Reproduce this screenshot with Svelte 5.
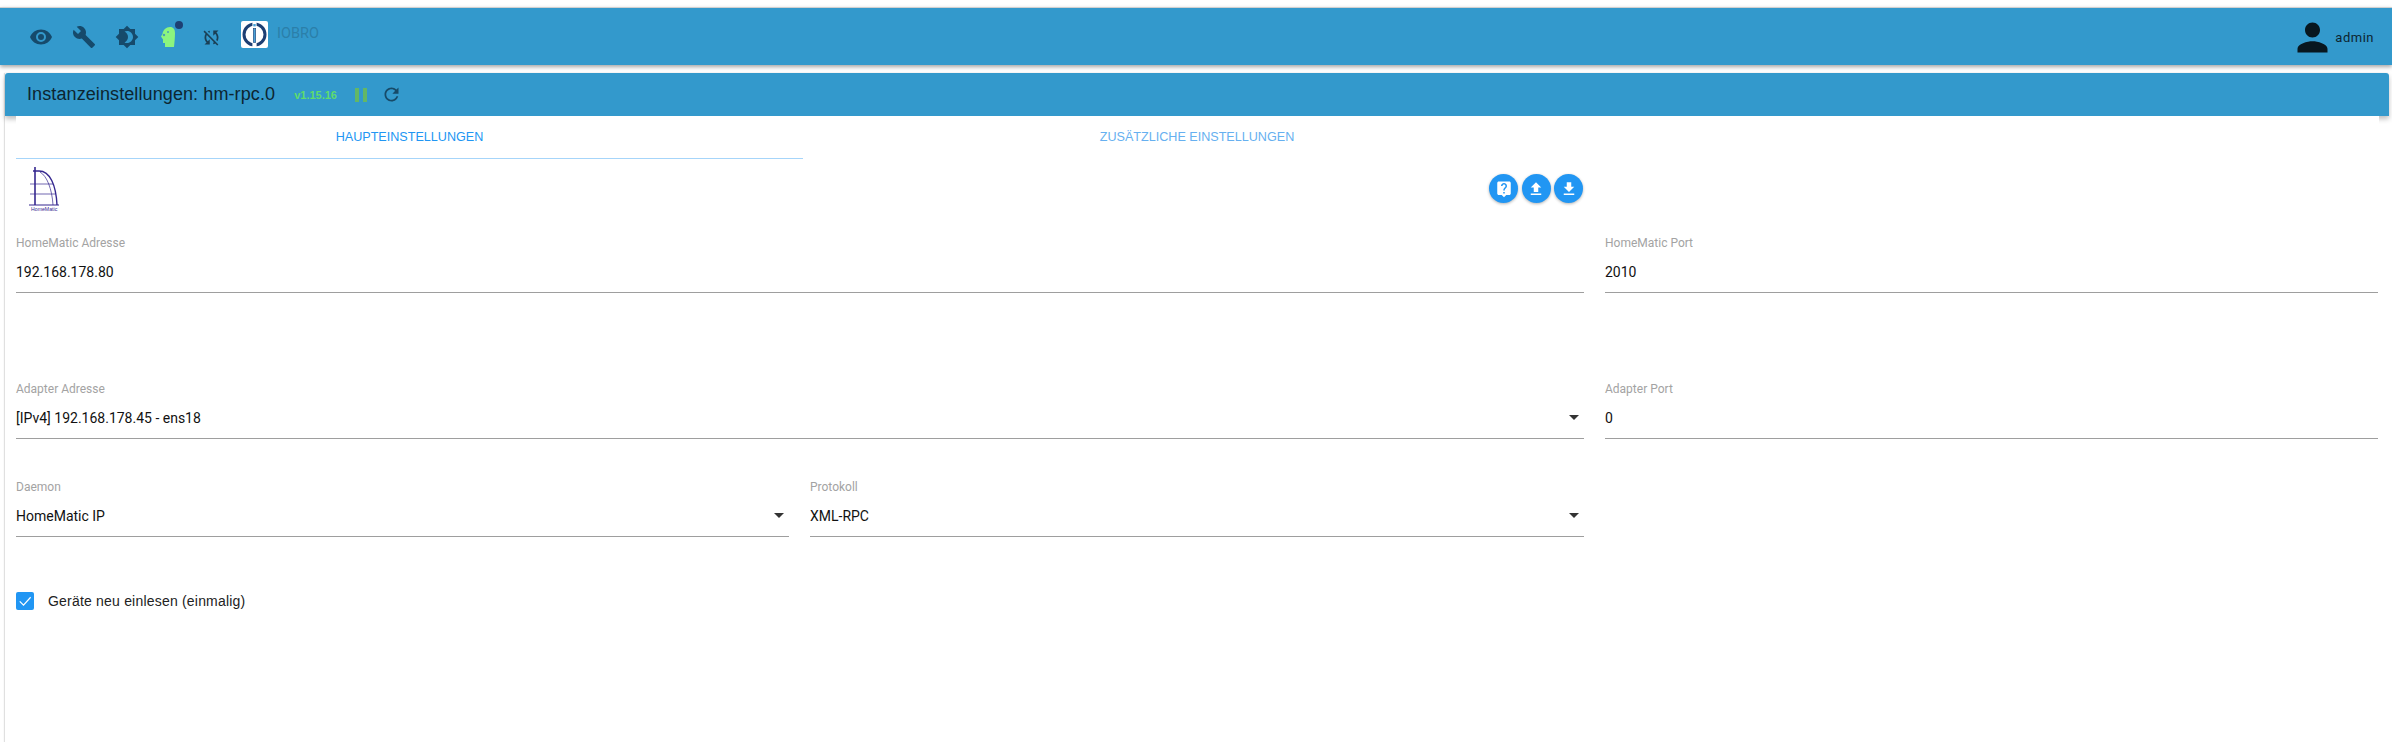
<script>
  const paths = {
    eye: "M12 9a3 3 0 0 0-3 3 3 3 0 0 0 3 3 3 3 0 0 0 3-3 3 3 0 0 0-3-3m0 8a5 5 0 0 1-5-5 5 5 0 0 1 5-5 5 5 0 0 1 5 5 5 5 0 0 1-5 5m0-12.5C7 4.5 2.73 7.61 1 12c1.73 4.39 6 7.5 11 7.5s9.27-3.11 11-7.5c-1.73-4.39-6-7.5-11-7.5z",
    wrench: "M22.7 19l-9.1-9.1c.9-2.3.4-5-1.5-6.9-2-2-5-2.4-7.4-1.3L9 6 6 9 1.6 4.7C.4 7.1.9 10.1 2.9 12.1c1.9 1.9 4.6 2.4 6.9 1.5l9.1 9.1c.4.4 1 .4 1.4 0l2.3-2.3c.5-.4.5-1.1.1-1.4z",
    brightness: "M20 8.69V4h-4.69L12 .69 8.69 4H4v4.69L.69 12 4 15.31V20h4.69L12 23.31 15.31 20H20v-4.69L23.31 12 20 8.69zM12 18c-.89 0-1.74-.2-2.5-.55C11.56 16.5 13 14.42 13 12s-1.44-4.5-3.5-5.45C10.26 6.2 11.11 6 12 6c3.31 0 6 2.69 6 6s-2.69 6-6 6z",
    syncOff: "M10 6.35V4.26c-.8.21-1.55.54-2.23.96l1.46 1.46c.25-.12.5-.24.77-.33zm-7.14-.94l2.36 2.36C4.45 8.99 4 10.44 4 12c0 2.21.91 4.2 2.36 5.64L4 20h6v-6l-2.24 2.24C6.68 15.15 6 13.66 6 12c0-1 .25-1.94.68-2.77l8.08 8.08c-.25.13-.5.25-.77.34v2.09c.8-.21 1.55-.54 2.23-.96l2.36 2.36 1.27-1.27L4.14 4.14 2.86 5.41zM20 4h-6v6l2.24-2.24C17.32 8.85 18 10.34 18 12c0 1-.25 1.94-.68 2.77l1.46 1.46C19.55 15.01 20 13.56 20 12c0-2.21-.91-4.2-2.36-5.64L20 4z",
    person: "M12 12c2.21 0 4-1.79 4-4s-1.79-4-4-4-4 1.79-4 4 1.79 4 4 4zm0 2c-2.67 0-8 1.34-8 4v2h16v-2c0-2.66-5.33-4-8-4z",
    refresh: "M17.65 6.35C16.2 4.9 14.21 4 12 4c-4.42 0-7.99 3.58-7.99 8s3.57 8 7.99 8c3.73 0 6.84-2.55 7.73-6h-2.08c-.82 2.33-3.04 4-5.65 4-3.31 0-6-2.69-6-6s2.69-6 6-6c1.66 0 3.14.69 4.22 1.78L13 11h7V4l-2.35 2.35z",
    pause: "M6 19h4V5H6v14zm8-14v14h4V5h-4z",
    help: "M19 2H5c-1.11 0-2 .9-2 2v14c0 1.1.89 2 2 2h4l3 3 3-3h4c1.1 0 2-.9 2-2V4c0-1.1-.9-2-2-2zm-6 16h-2v-2h2v2zm2.07-7.75l-.9.92C13.45 11.9 13 12.5 13 14h-2v-.5c0-1.1.45-2.1 1.17-2.83l1.24-1.26c.37-.36.59-.86.59-1.41 0-1.1-.9-2-2-2s-2 .9-2 2H8c0-2.21 1.79-4 4-4s4 1.79 4 4c0 .88-.36 1.68-.93 2.25z",
    upload: "M9 16h6v-6h4l-7-7-7 7h4zm-4 2h14v2H5z",
    download: "M19 9h-4V3H9v6H5l7 7 7-7zM5 18v2h14v-2H5z"
  };

  const rows = [
    { cls: "row-a", fields: [
      { label: "HomeMatic Adresse", value: "192.168.178.80", cls: "wide" },
      { label: "HomeMatic Port", value: "2010" }
    ]},
    { cls: "row-b", fields: [
      { label: "Adapter Adresse", value: "[IPv4] 192.168.178.45 - ens18", cls: "wide", select: true },
      { label: "Adapter Port", value: "0" }
    ]},
    { cls: "row-c", fields: [
      { label: "Daemon", value: "HomeMatic IP", select: true },
      { label: "Protokoll", value: "XML-RPC", select: true }
    ]}
  ];
</script>

<div class="page">
  <header class="toolbar">
    <div class="tools">
      <svg class="tool" viewBox="0 0 24 24"><path d={paths.eye} /></svg>
      <svg class="tool" viewBox="0 0 24 24"><path d={paths.wrench} /></svg>
      <svg class="tool" viewBox="0 0 24 24"><path d={paths.brightness} /></svg>
      <span class="head">
        <svg viewBox="0 0 14 20">
          <path fill="#8cf57f" d="M4 20 V16 H2 V12.5 L0 9.5 L1.5 7 C2 3 5 0 9 0 C12.5 0 14 2.5 14 6 C14 11 13.5 15 13 20 Z" />
          <circle cx="3" cy="8" r="1.2" fill="#4a9fb5" />
          <circle cx="7" cy="5" r="1" fill="#4a9fb5" />
        </svg>
        <i class="dot"></i>
      </span>
      <svg class="tool small" viewBox="0 0 24 24"><path d={paths.syncOff} /></svg>
    </div>
    <div class="logo">
      <svg viewBox="0 0 27 27">
        <circle cx="13.5" cy="13.5" r="10.5" fill="none" stroke="#1d3f73" stroke-width="3" />
        <rect x="11.4" y="1" width="4.2" height="25" fill="#fff" />
        <rect x="12.3" y="7.5" width="2.4" height="14" fill="#4aa3d8" stroke="#1d3f73" stroke-width=".6" />
        <rect x="12.3" y="3" width="2.4" height="2.4" fill="#4aa3d8" />
      </svg>
    </div>
    <span class="brand">IOBRO</span>
    <div class="user">
      <svg viewBox="0 0 24 24"><path d={paths.person} /></svg>
      <span>admin</span>
    </div>
  </header>

  <main class="card">
    <div class="card-head">
      <h1>Instanzeinstellungen: hm-rpc.0</h1>
      <span class="version">v1.15.16</span>
      <svg class="pause" viewBox="0 0 24 24"><path d={paths.pause} /></svg>
      <svg class="refresh" viewBox="0 0 24 24"><path d={paths.refresh} /></svg>
    </div>

    <div class="body">
      <nav class="tabs">
        <div class="tab active">HAUPTEINSTELLUNGEN</div>
        <div class="tab">ZUSÄTZLICHE EINSTELLUNGEN</div>
      </nav>

      <div class="tools-row">
        <svg class="hm-logo" viewBox="0 0 32 46">
          <g fill="none" stroke="#35278f">
            <path stroke-width="1.6" d="M7 40 V2" />
            <path stroke-width="1.4" d="M5 6 H11 C22 6 28 20 29 40" />
            <path stroke-width=".7" d="M12 7 C19 11 24 24 25 40" />
            <path stroke-width=".7" d="M2 19 H25 M2 29 H27" />
            <path stroke-width="1" d="M1 40 H31" />
          </g>
          <text x="3" y="45.5" class="hm-text">HomeMatic</text>
        </svg>
        <div class="actions">
          <button aria-label="Hilfe"><svg viewBox="0 0 24 24"><path d={paths.help} /></svg></button>
          <button aria-label="Hochladen"><svg viewBox="0 0 24 24"><path d={paths.upload} /></svg></button>
          <button aria-label="Herunterladen"><svg viewBox="0 0 24 24"><path d={paths.download} /></svg></button>
        </div>
      </div>

      {#each rows as row}
        <div class="form-row {row.cls}">
          {#each row.fields as f}
            <div class="field {f.cls ?? ''}">
              <span class="label">{f.label}</span>
              <div class="value">
                <span>{f.value}</span>
                {#if f.select}<i class="caret"></i>{/if}
              </div>
            </div>
          {/each}
        </div>
      {/each}

      <label class="check">
        <span class="box">
          <svg viewBox="0 0 24 24"><path d="M5 12.5 L10 17.5 L19.5 7" /></svg>
        </span>
        <span>Geräte neu einlesen (einmalig)</span>
      </label>
    </div>
  </main>
</div>

<style>
  :global(body) {
    background: #fff;
    font-family: Roboto, "Liberation Sans", sans-serif;
    overflow: hidden;
  }
  .page {
    height: 742px;
    overflow: hidden;
    background: #fff;
  }
  .toolbar {
    margin-top: 7px;
    height: 58px;
    border-top: 1px solid #d0d0d0;
    box-sizing: border-box;
    background: #3399cc;
    box-shadow: 0 2px 4px rgba(0, 0, 0, 0.35);
    display: flex;
    align-items: flex-start;
    position: relative;
    padding-left: 29px;
  }
  .tools {
    display: flex;
    align-items: center;
    gap: 19px;
    height: 57px;
  }
  .tool {
    width: 24px;
    height: 24px;
    fill: #164a6b;
  }
  .tool.small {
    width: 21px;
    height: 21px;
    fill: #1a3f55;
    margin-top: 1px;
  }
  .head {
    position: relative;
    width: 24px;
    height: 20px;
    padding-left: 3px;
    box-sizing: border-box;
  }
  .head svg {
    display: block;
    width: 14px;
    height: 20px;
  }
  .dot {
    position: absolute;
    top: -6px;
    left: 17px;
    width: 8px;
    height: 8px;
    border-radius: 50%;
    background: #1d3f73;
  }
  .logo {
    width: 27px;
    height: 27px;
    margin: 13px 0 0 19px;
    background: #fff;
    border-radius: 2px;
  }
  .logo svg {
    display: block;
    width: 27px;
    height: 27px;
  }
  .brand {
    margin: 17px 0 0 9px;
    font-size: 14.5px;
    color: #2b7fa9;
  }
  .user {
    position: absolute;
    right: 18px;
    top: 7px;
    display: flex;
    align-items: center;
    color: #0d2530;
    font-size: 13px;
    letter-spacing: 0.5px;
  }
  .user svg {
    width: 45px;
    height: 45px;
    fill: #08171f;
  }
  .card {
    margin: 8px 3px 0 5px;
    height: 680px;
    box-shadow: -1px 0 1px rgba(0, 0, 0, 0.12);
  }
  .card-head {
    height: 43px;
    background: #3399cc;
    border-radius: 3px 3px 0 0;
    display: flex;
    align-items: center;
    padding-left: 22px;
    color: #0d2530;
    box-shadow: 0 3px 5px rgba(0, 0, 0, 0.25);
  }
  h1 {
    margin: 0;
    font-size: 18px;
    letter-spacing: 0.1px;
    font-weight: 400;
    font-family: "Liberation Sans", sans-serif;
  }
  .version {
    margin-left: 19px;
    font-size: 11px;
    font-weight: 700;
    color: #5fdc6c;
    font-family: "Liberation Sans", sans-serif;
  }
  .pause {
    width: 24px;
    height: 24px;
    margin-left: 12px;
    fill: #63b765;
  }
  .refresh {
    width: 21px;
    height: 21px;
    margin-left: 8px;
    fill: #174a68;
  }
  .body {
    position: relative;
    background: #fff;
    margin: 0 10px 0 11px;
    height: 637px;
  }
  .tabs {
    display: grid;
    grid-template-columns: 787px 788px;
    height: 43px;
    font-family: "Liberation Sans", sans-serif;
  }
  .tab {
    text-align: center;
    font-size: 12.6px;
    line-height: 42px;
    color: #66b0f0;
  }
  .tab.active {
    color: #2196f3;
    border-bottom: 1px solid #a6d5fa;
  }
  .tools-row {
    display: flex;
    height: 55px;
    position: relative;
  }
  .hm-logo {
    width: 32px;
    height: 46px;
    margin: 6px 0 0 12px;
  }
  .hm-text {
    font-size: 5.2px;
    fill: #35278f;
    font-family: "Liberation Sans", sans-serif;
  }
  .actions {
    position: absolute;
    left: 1473px;
    top: 15px;
    display: flex;
    gap: 3.5px;
  }
  .actions button {
    width: 29px;
    height: 29px;
    padding: 0;
    border: 0;
    border-radius: 50%;
    background: #2196f3;
    box-shadow: 0 1px 3px rgba(0, 0, 0, 0.3);
    display: flex;
    align-items: center;
    justify-content: center;
  }
  .actions svg {
    width: 18px;
    height: 18px;
    fill: #fff;
  }
  .form-row {
    display: grid;
    grid-template-columns: 773px 774px 773px;
    column-gap: 21px;
  }
  .row-a {
    margin-top: 22px;
  }
  .row-b {
    margin-top: 89px;
  }
  .row-c {
    margin-top: 41px;
  }
  .wide {
    grid-column: span 2;
  }
  .field {
    display: flex;
    flex-direction: column;
  }
  .label {
    font-size: 12px;
    line-height: 14px;
    color: #a3a3a3;
  }
  .value {
    margin-top: 9px;
    height: 34px;
    box-sizing: border-box;
    border-bottom: 1px solid #9e9e9e;
    display: flex;
    justify-content: space-between;
    align-items: flex-start;
    padding-top: 4px;
    font-size: 14px;
    line-height: 18px;
    color: #111;
  }
  .caret {
    width: 0;
    height: 0;
    margin: 6px 5px 0 0;
    border-left: 5px solid transparent;
    border-right: 5px solid transparent;
    border-top: 5px solid #333;
  }
  .check {
    display: flex;
    align-items: center;
    gap: 14px;
    margin-top: 55px;
    font-size: 14px;
    letter-spacing: 0.2px;
    color: #222;
    font-family: "Liberation Sans", sans-serif;
  }
  .box {
    width: 18px;
    height: 18px;
    border-radius: 2px;
    background: #2196f3;
  }
  .box svg {
    display: block;
    width: 18px;
    height: 18px;
    fill: none;
    stroke: #fff;
    stroke-width: 1.6;
  }
</style>
